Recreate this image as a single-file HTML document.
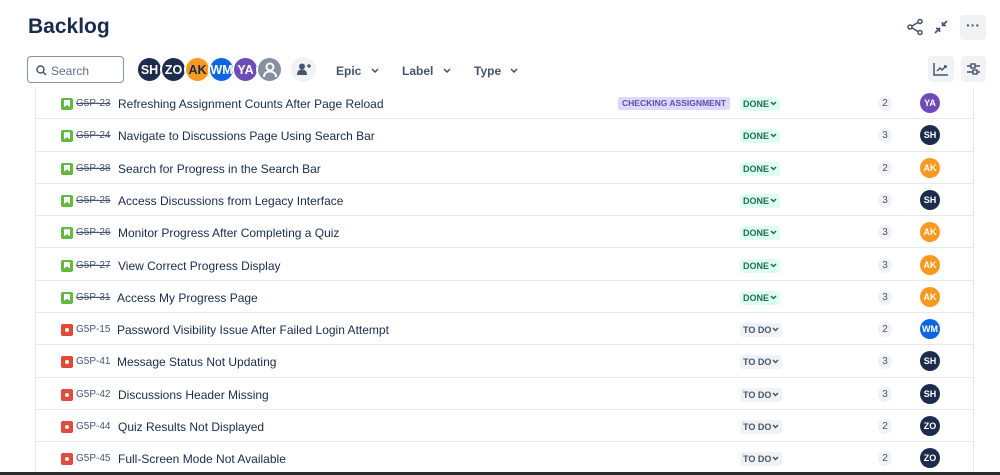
<!DOCTYPE html>
<html><head><style>
*{margin:0;padding:0;box-sizing:border-box}
body{width:1000px;height:475px;overflow:hidden;background:#fff;font-family:"Liberation Sans",sans-serif;color:#172b4d;position:relative}
.abs{position:absolute}
h1{position:absolute;left:28px;top:15px;font-size:21px;font-weight:bold;color:#172b4d}
.search{left:27px;top:56px;width:97px;height:27px;border:1px solid #8590a2;border-radius:4px;font-size:12px;color:#626f86;padding:7px 0 0 23px}
.av{position:absolute;border-radius:50%;color:#fff;font-weight:bold;display:flex;align-items:center;justify-content:center}
.top .av{width:27px;height:27px;top:56px;font-size:12.5px;border:2px solid #fff}
.flt{top:64px;font-size:12px;font-weight:bold;color:#44546f}
.cv{display:inline-block;width:7px;height:4px;margin-left:4px;vertical-align:2px;border-left:0}
.btn{background:#f1f2f4;border-radius:4px}
.tbl{left:35px;top:87px;width:939px;height:388px;border-left:1px solid #e6e8eb;border-right:1px solid #e6e8eb}
.row{position:absolute;left:36px;width:937px;height:32.3px;border-bottom:1px solid #e6e8eb}
.ic{position:absolute;left:25px;top:11px;width:12px;height:12px;border-radius:2px}
.story{background:#63ba3c}
.story:after{content:"";position:absolute;left:3px;top:2px;width:6px;height:7px;background:#fff;clip-path:polygon(0 0,100% 0,100% 100%,50% 70%,0 100%)}
.bug{background:#e5493a}
.bug:after{content:"";position:absolute;left:4px;top:4px;width:4px;height:4px;background:#fff;border-radius:50%}
.key{position:absolute;left:40px;top:11px;font-size:10px;color:#44546f}
.done .key{text-decoration:line-through}
.t{position:absolute;top:10px;font-size:12px;color:#172b4d}
.st{position:absolute;left:704px;top:10px;height:14px;padding:0 3px;font-size:9px;font-weight:bold;border-radius:3px;line-height:14px}
.done .st{background:#dcfff1;color:#216e4e}
.todo .st{background:#f1f2f4;color:#44546f}
.st svg{vertical-align:1px;margin-left:1px}
.est{position:absolute;left:842px;top:9px;width:14px;height:15px;border-radius:7px;background:#f1f2f4;font-size:10px;color:#44546f;text-align:center;line-height:15px}
.row .av{width:20px;height:20px;left:884px;top:6px;font-size:9px}
.lab{position:absolute;left:582px;top:10px;height:13px;padding:0 4px;background:#dfd8fd;color:#5e4db2;font-size:8.5px;font-weight:bold;line-height:13px;border-radius:2px}
.sh{background:#1d2b4f}.zo{background:#1d2b4f}.ak{background:#f99a1f}.wm{background:#0c66e4}.ya{background:#6e4bb8}
</style></head><body>
<h1>Backlog</h1>
<svg class="abs" style="left:906px;top:18px" width="18" height="18" viewBox="0 0 18 18" fill="none" stroke="#44546f" stroke-width="1.5"><circle cx="4" cy="9" r="2"/><circle cx="14" cy="3.5" r="2"/><circle cx="14" cy="14.5" r="2"/><path d="M6 8L12 4.5M6 10L12 13.5"/></svg>
<svg class="abs" style="left:933px;top:19px" width="16" height="16" viewBox="0 0 16 16" fill="none" stroke="#44546f" stroke-width="1.6"><path d="M14 2L9.5 6.5M9.5 3v3.5H13M2 14l4.5-4.5M3 9.5h3.5V13"/></svg>
<div class="abs btn" style="left:960px;top:15px;width:26px;height:25px;font-size:14px;font-weight:bold;color:#44546f;text-align:center;line-height:20px">&middot;&middot;&middot;</div>
<div class="abs search"><svg class="abs" style="left:8px;top:8px" width="11" height="11" viewBox="0 0 11 11" fill="none" stroke="#44546f" stroke-width="1.4"><circle cx="4.5" cy="4.5" r="3.5"/><path d="M7 7l3 3"/></svg>Search</div>
<div class="top">
<div class="av sh" style="left:136px">SH</div>
<div class="av zo" style="left:160px">ZO</div>
<div class="av ak" style="left:184px;color:#172b4d">AK</div>
<div class="av wm" style="left:208px">WM</div>
<div class="av ya" style="left:232px">YA</div>
<div class="av" style="left:256px;background:#8590a2"><svg width="18" height="18" viewBox="0 0 18 18" fill="none" stroke="#fff" stroke-width="2"><circle cx="9" cy="6" r="3.5"/><path d="M3 16c0-4 3-5.5 6-5.5s6 1.5 6 5.5"/></svg></div>
</div>
<div class="abs" style="left:291px;top:57px;width:25px;height:25px;border-radius:50%;background:#f1f2f4"><svg class="abs" style="left:6px;top:6px" width="14" height="13" viewBox="0 0 14 13" fill="#44546f"><circle cx="5" cy="3.5" r="3"/><path d="M0 12c0-4 2-5.5 5-5.5s5 1.5 5 5.5z"/><path d="M10 3h4M12 1v4" stroke="#44546f" stroke-width="1.4"/></svg></div>
<div class="abs flt" style="left:336px">Epic <svg width="8" height="5" style="margin-left:6px;vertical-align:2px" viewBox="0 0 8 5" fill="none" stroke="#44546f" stroke-width="1.5"><path d="M1 1l3 3 3-3"/></svg></div>
<div class="abs flt" style="left:402px">Label <svg width="8" height="5" style="margin-left:6px;vertical-align:2px" viewBox="0 0 8 5" fill="none" stroke="#44546f" stroke-width="1.5"><path d="M1 1l3 3 3-3"/></svg></div>
<div class="abs flt" style="left:474px">Type <svg width="8" height="5" style="margin-left:6px;vertical-align:2px" viewBox="0 0 8 5" fill="none" stroke="#44546f" stroke-width="1.5"><path d="M1 1l3 3 3-3"/></svg></div>
<div class="abs btn" style="left:928px;top:56px;width:26px;height:26px"><svg class="abs" style="left:5px;top:6px" width="16" height="14" viewBox="0 0 16 14" fill="none" stroke="#44546f" stroke-width="1.5"><path d="M1 1v12h14M4 9l3-3 2 2 4-4M11 4h2v2"/></svg></div>
<div class="abs btn" style="left:961px;top:56px;width:25px;height:26px"><svg class="abs" style="left:5px;top:6px" width="15" height="14" viewBox="0 0 15 14" fill="none" stroke="#44546f" stroke-width="1.4"><path d="M1 4h4M9 4h5M1 10h6M11 10h3"/><rect x="5" y="2" width="4" height="4"/><rect x="7" y="8" width="4" height="4"/></svg></div>
<div class="abs tbl"></div>

<div class="row done" style="top:87px"><div class="ic story"></div><div class="key">G5P-23</div><div class="t" style="left:82px">Refreshing Assignment Counts After Page Reload</div><div class="lab">CHECKING ASSIGNMENT</div><div class="st">DONE<svg width="7" height="5" viewBox="0 0 7 5" fill="none" stroke="currentColor" stroke-width="1.5"><path d="M1 1l2.5 2.5L6 1"/></svg></div><div class="est">2</div><div class="av ya">YA</div></div>
<div class="row done" style="top:119.3px"><div class="ic story"></div><div class="key">G5P-24</div><div class="t" style="left:82px">Navigate to Discussions Page Using Search Bar</div><div class="st">DONE<svg width="7" height="5" viewBox="0 0 7 5" fill="none" stroke="currentColor" stroke-width="1.5"><path d="M1 1l2.5 2.5L6 1"/></svg></div><div class="est">3</div><div class="av sh">SH</div></div>
<div class="row done" style="top:151.6px"><div class="ic story"></div><div class="key">G5P-38</div><div class="t" style="left:82px">Search for Progress in the Search Bar</div><div class="st">DONE<svg width="7" height="5" viewBox="0 0 7 5" fill="none" stroke="currentColor" stroke-width="1.5"><path d="M1 1l2.5 2.5L6 1"/></svg></div><div class="est">2</div><div class="av ak">AK</div></div>
<div class="row done" style="top:183.9px"><div class="ic story"></div><div class="key">G5P-25</div><div class="t" style="left:82px">Access Discussions from Legacy Interface</div><div class="st">DONE<svg width="7" height="5" viewBox="0 0 7 5" fill="none" stroke="currentColor" stroke-width="1.5"><path d="M1 1l2.5 2.5L6 1"/></svg></div><div class="est">3</div><div class="av sh">SH</div></div>
<div class="row done" style="top:216.2px"><div class="ic story"></div><div class="key">G5P-26</div><div class="t" style="left:82px">Monitor Progress After Completing a Quiz</div><div class="st">DONE<svg width="7" height="5" viewBox="0 0 7 5" fill="none" stroke="currentColor" stroke-width="1.5"><path d="M1 1l2.5 2.5L6 1"/></svg></div><div class="est">3</div><div class="av ak">AK</div></div>
<div class="row done" style="top:248.5px"><div class="ic story"></div><div class="key">G5P-27</div><div class="t" style="left:82px">View Correct Progress Display</div><div class="st">DONE<svg width="7" height="5" viewBox="0 0 7 5" fill="none" stroke="currentColor" stroke-width="1.5"><path d="M1 1l2.5 2.5L6 1"/></svg></div><div class="est">3</div><div class="av ak">AK</div></div>
<div class="row done" style="top:280.8px"><div class="ic story"></div><div class="key">G5P-31</div><div class="t" style="left:81px">Access My Progress Page</div><div class="st">DONE<svg width="7" height="5" viewBox="0 0 7 5" fill="none" stroke="currentColor" stroke-width="1.5"><path d="M1 1l2.5 2.5L6 1"/></svg></div><div class="est">3</div><div class="av ak">AK</div></div>
<div class="row todo" style="top:313.1px"><div class="ic bug"></div><div class="key">G5P-15</div><div class="t" style="left:81px">Password Visibility Issue After Failed Login Attempt</div><div class="st">TO DO<svg width="7" height="5" viewBox="0 0 7 5" fill="none" stroke="currentColor" stroke-width="1.5"><path d="M1 1l2.5 2.5L6 1"/></svg></div><div class="est">2</div><div class="av wm">WM</div></div>
<div class="row todo" style="top:345.4px"><div class="ic bug"></div><div class="key">G5P-41</div><div class="t" style="left:81px">Message Status Not Updating</div><div class="st">TO DO<svg width="7" height="5" viewBox="0 0 7 5" fill="none" stroke="currentColor" stroke-width="1.5"><path d="M1 1l2.5 2.5L6 1"/></svg></div><div class="est">3</div><div class="av sh">SH</div></div>
<div class="row todo" style="top:377.7px"><div class="ic bug"></div><div class="key">G5P-42</div><div class="t" style="left:82px">Discussions Header Missing</div><div class="st">TO DO<svg width="7" height="5" viewBox="0 0 7 5" fill="none" stroke="currentColor" stroke-width="1.5"><path d="M1 1l2.5 2.5L6 1"/></svg></div><div class="est">3</div><div class="av sh">SH</div></div>
<div class="row todo" style="top:410px"><div class="ic bug"></div><div class="key">G5P-44</div><div class="t" style="left:82px">Quiz Results Not Displayed</div><div class="st">TO DO<svg width="7" height="5" viewBox="0 0 7 5" fill="none" stroke="currentColor" stroke-width="1.5"><path d="M1 1l2.5 2.5L6 1"/></svg></div><div class="est">2</div><div class="av zo">ZO</div></div>
<div class="row todo" style="top:442.3px;border-bottom:none"><div class="ic bug"></div><div class="key">G5P-45</div><div class="t" style="left:82px">Full-Screen Mode Not Available</div><div class="st">TO DO<svg width="7" height="5" viewBox="0 0 7 5" fill="none" stroke="currentColor" stroke-width="1.5"><path d="M1 1l2.5 2.5L6 1"/></svg></div><div class="est">2</div><div class="av zo">ZO</div></div>
<div class="abs" style="left:0;top:472px;width:1000px;height:3px;background:#2b2b2b"></div>
</body></html>
